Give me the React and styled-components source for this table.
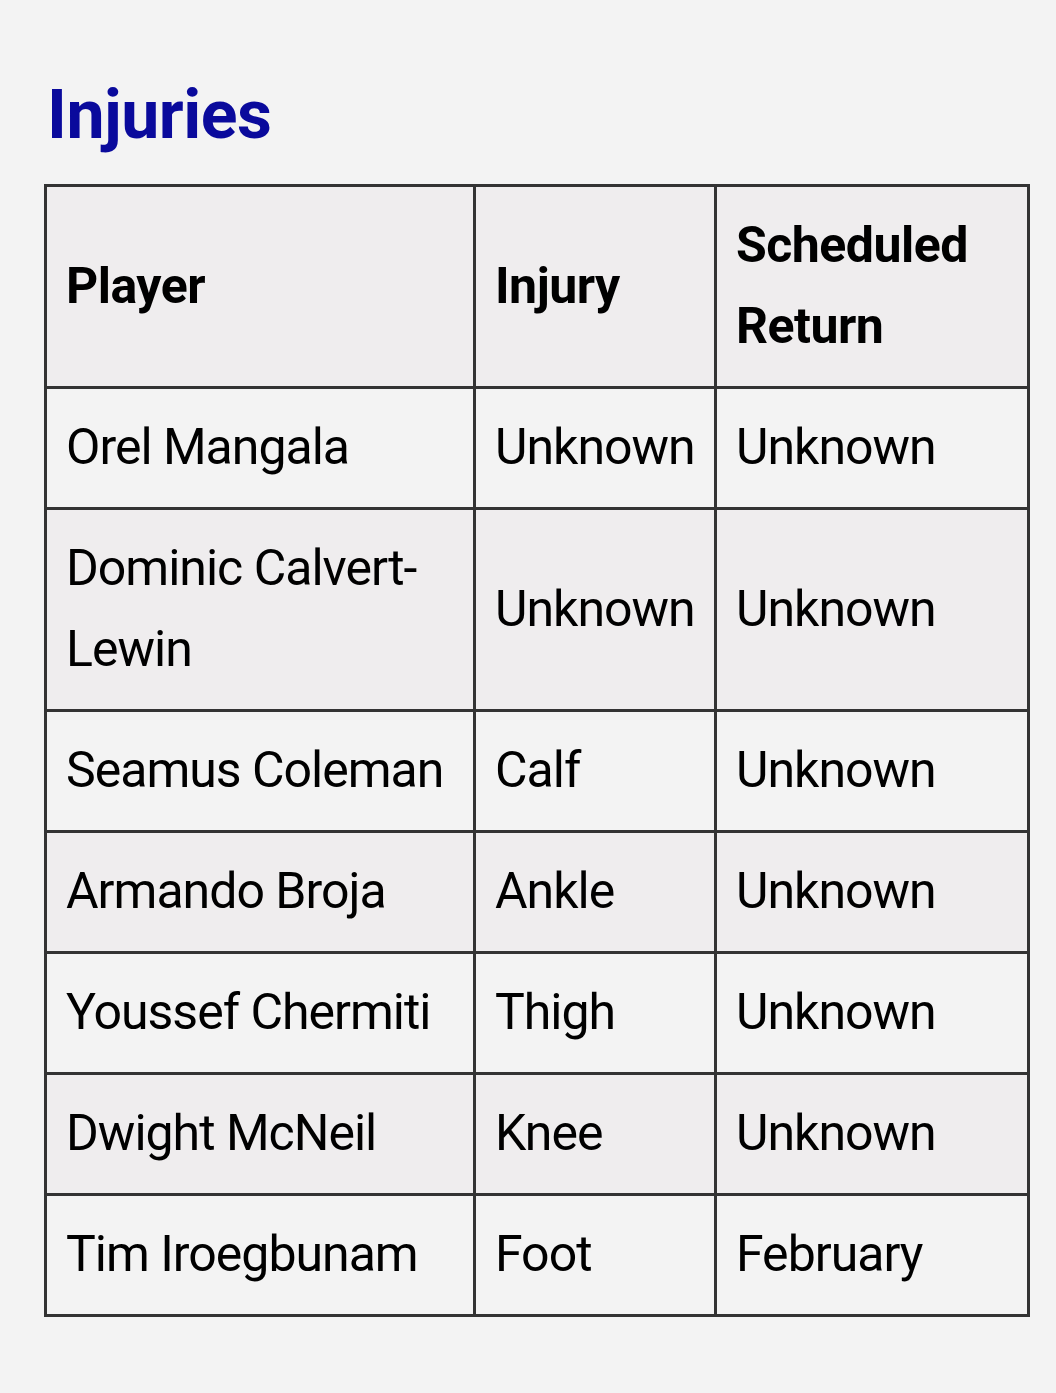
import React from "react";
import styled, { createGlobalStyle } from "styled-components";

const GlobalStyle = createGlobalStyle`
    html, body {
        margin: 0;
        padding: 0;
        background: #f3f3f3;
    }
    body {
        font-family: "Roboto", "Liberation Sans", sans-serif;
        color: #000;
    }
`;

const injuries = [
    { player: "Orel Mangala", injury: "Unknown", back: "Unknown" },
    { player: "Dominic Calvert-Lewin", injury: "Unknown", back: "Unknown" },
    { player: "Seamus Coleman", injury: "Calf", back: "Unknown" },
    { player: "Armando Broja", injury: "Ankle", back: "Unknown" },
    { player: "Youssef Chermiti", injury: "Thigh", back: "Unknown" },
    { player: "Dwight McNeil", injury: "Knee", back: "Unknown" },
    { player: "Tim Iroegbunam", injury: "Foot", back: "February" },
];

const App = () => {
    return (
        <>
            <GlobalStyle />
            <Page>
                <Title>Injuries</Title>
                <Table>
                    <colgroup>
                        <col style={{ width: 429 }} />
                        <col style={{ width: 241 }} />
                        <col style={{ width: 313 }} />
                    </colgroup>
                    <thead>
                        <tr>
                            <Th>Player</Th>
                            <Th>Injury</Th>
                            <Th>Scheduled Return</Th>
                        </tr>
                    </thead>
                    <tbody>
                        {injuries.map((row, i) => (
                            <Row key={row.player} $shaded={i % 2 === 1}>
                                <Td>{row.player}</Td>
                                <Td>{row.injury}</Td>
                                <Td>{row.back}</Td>
                            </Row>
                        ))}
                    </tbody>
                </Table>
            </Page>
        </>
    );
};

const Page = styled.main`
    padding: 75px 26px 76px 44px;
`;

const Title = styled.h2`
    margin: 0 0 29px 3px;
    font-size: 68px;
    line-height: 80px;
    font-weight: 700;
    letter-spacing: -0.5px;
    color: #0a0a9c;
`;

const Table = styled.table`
    width: 986px;
    border-collapse: collapse;
    table-layout: fixed;
    border: 3px solid #333;
`;

const Th = styled.th`
    text-align: left;
    background: #efedee;
    border: 3px solid #333;
    padding: 18px 16px 19px 19px;
    font-size: 50px;
    line-height: 81px;
    font-weight: 700;
    letter-spacing: -0.5px;
`;

const Row = styled.tr`
    background: ${({ $shaded }) => ($shaded ? "#efedee" : "#f3f3f3")};
`;

const Td = styled.td`
    border: 3px solid #333;
    padding: 18px 16px 19px 19px;
    font-size: 50px;
    line-height: 81px;
    font-weight: 400;
    letter-spacing: -1px;
    vertical-align: middle;
`;

export default App;
